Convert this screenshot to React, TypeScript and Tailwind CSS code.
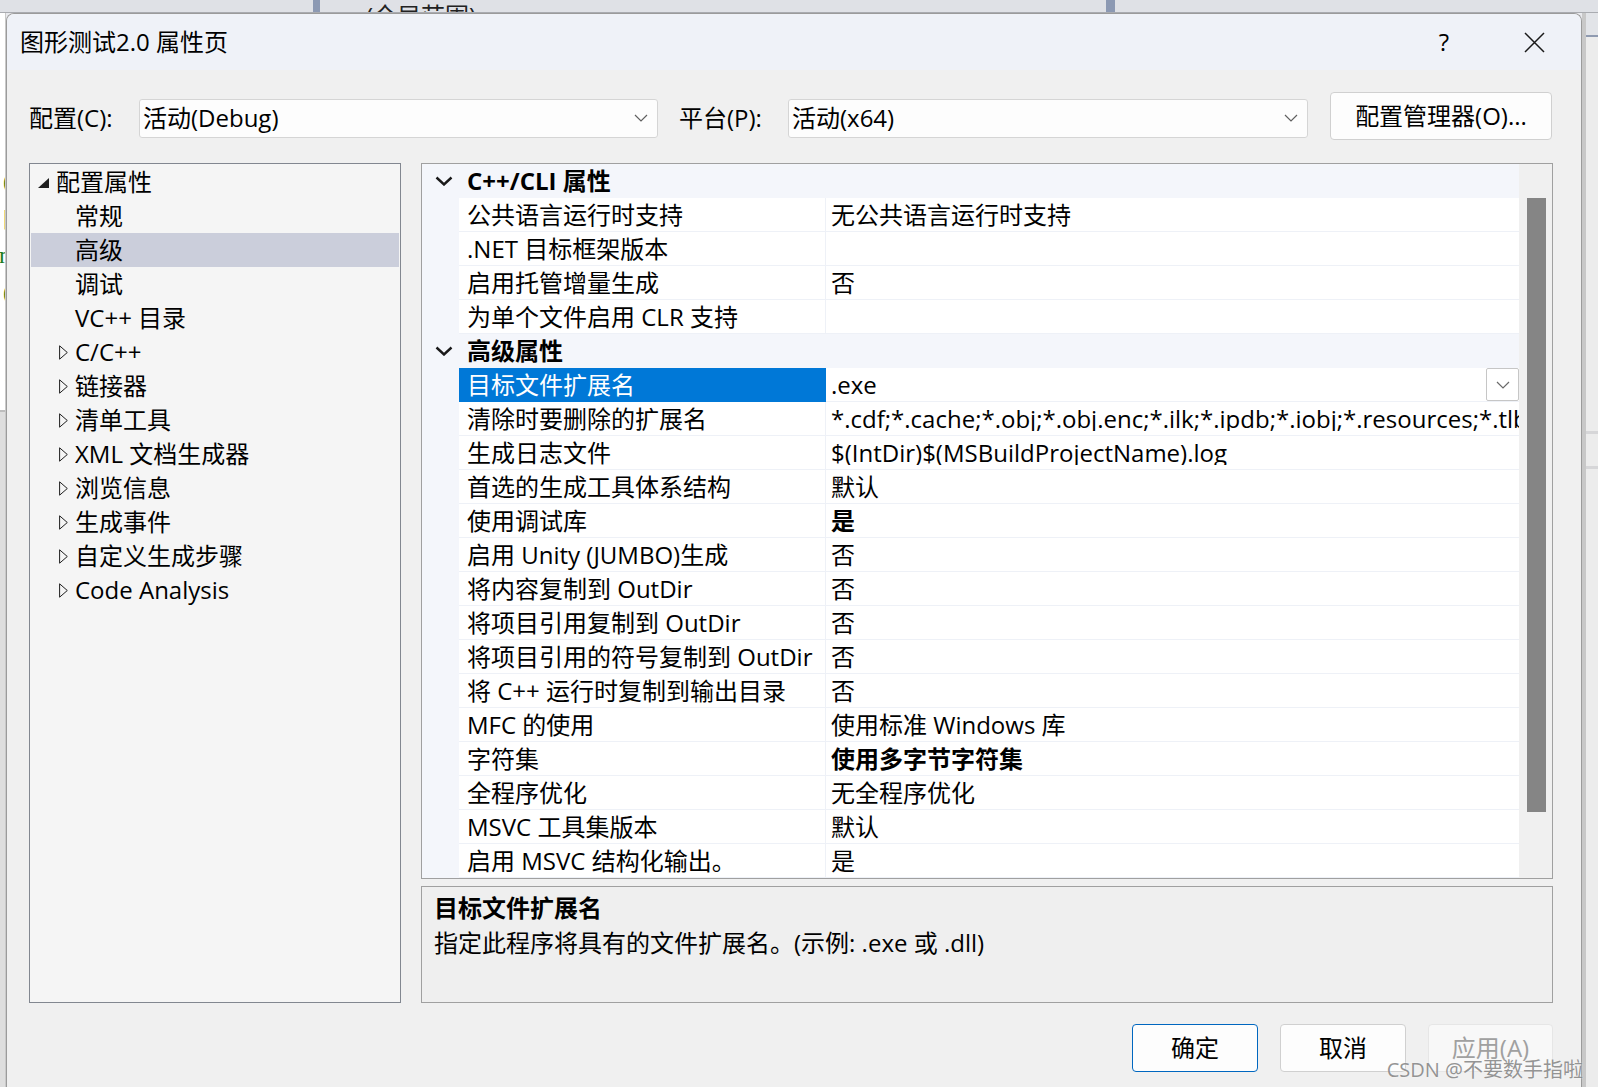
import React from 'react';

const FONT = "font-['Open_Sans','Noto_Sans_CJK_SC',sans-serif]";

type TreeItem = { label: string; level: 0 | 1; exp?: 'open' | 'closed'; sel?: boolean };

const treeItems: TreeItem[] = [
  { label: '配置属性', level: 0, exp: 'open' },
  { label: '常规', level: 1 },
  { label: '高级', level: 1, sel: true },
  { label: '调试', level: 1 },
  { label: 'VC++ 目录', level: 1 },
  { label: 'C/C++', level: 1, exp: 'closed' },
  { label: '链接器', level: 1, exp: 'closed' },
  { label: '清单工具', level: 1, exp: 'closed' },
  { label: 'XML 文档生成器', level: 1, exp: 'closed' },
  { label: '浏览信息', level: 1, exp: 'closed' },
  { label: '生成事件', level: 1, exp: 'closed' },
  { label: '自定义生成步骤', level: 1, exp: 'closed' },
  { label: 'Code Analysis', level: 1, exp: 'closed' },
];

type GridRow =
  | { cat: string }
  | { name: string; value: string; bold?: boolean; sel?: boolean };

const gridRows: GridRow[] = [
  { cat: 'C++/CLI 属性' },
  { name: '公共语言运行时支持', value: '无公共语言运行时支持' },
  { name: '.NET 目标框架版本', value: '' },
  { name: '启用托管增量生成', value: '否' },
  { name: '为单个文件启用 CLR 支持', value: '' },
  { cat: '高级属性' },
  { name: '目标文件扩展名', value: '.exe', sel: true },
  {
    name: '清除时要删除的扩展名',
    value:
      '*.cdf;*.cache;*.obj;*.obj.enc;*.ilk;*.ipdb;*.iobj;*.resources;*.tlb;*.tli;*.tlh;*.tmp;*.rsp;*.pgc;*.pgd;*.meta;*.tlog;*.manifest;*.res;*.pch;*.exp',
  },
  { name: '生成日志文件', value: '$(IntDir)$(MSBuildProjectName).log' },
  { name: '首选的生成工具体系结构', value: '默认' },
  { name: '使用调试库', value: '是', bold: true },
  { name: '启用 Unity (JUMBO)生成', value: '否' },
  { name: '将内容复制到 OutDir', value: '否' },
  { name: '将项目引用复制到 OutDir', value: '否' },
  { name: '将项目引用的符号复制到 OutDir', value: '否' },
  { name: '将 C++ 运行时复制到输出目录', value: '否' },
  { name: 'MFC 的使用', value: '使用标准 Windows 库' },
  { name: '字符集', value: '使用多字节字符集', bold: true },
  { name: '全程序优化', value: '无全程序优化' },
  { name: 'MSVC 工具集版本', value: '默认' },
  { name: '启用 MSVC 结构化输出。', value: '是' },
];

function ComboChevron() {
  return (
    <svg width="14" height="8" viewBox="0 0 14 8">
      <path d="M1 1l6 6 6-6" fill="none" stroke="#606060" strokeWidth="1.2" />
    </svg>
  );
}

function Combo({ text, width }: { text: string; width: string }) {
  return (
    <div
      className={`${width} h-[39px] mt-[4px] shrink-0 flex items-center justify-between bg-[#fdfdfd] border border-[#d5d5d5] rounded-[3px] pl-[3px] pr-[9px]`}
    >
      <span className="text-[24px] leading-none">{text}</span>
      <ComboChevron />
    </div>
  );
}

function TreeRow({ item }: { item: TreeItem }) {
  const pad = item.level === 0 ? 'pl-[7px]' : item.exp ? 'pl-[28px]' : 'pl-[44px]';
  return (
    <div
      className={`h-[34px] mx-[1px] flex items-center gap-[7px] ${pad} ${item.sel ? 'bg-[#cbcedb]' : ''}`}
    >
      {item.exp === 'open' && (
        <svg width="11" height="10" viewBox="0 0 11 10" className="mt-[1px]">
          <path d="M11 0V10H0Z" fill="#1e1e1e" />
        </svg>
      )}
      {item.exp === 'closed' && (
        <svg width="9" height="15" viewBox="0 0 9 15">
          <path d="M0.6 0.8L8.3 7.5L0.6 14.2Z" fill="none" stroke="#1e1e1e" strokeWidth="1" />
        </svg>
      )}
      <span className="text-[24px] leading-none whitespace-nowrap">{item.label}</span>
    </div>
  );
}

function GridLine({ row }: { row: GridRow }) {
  if ('cat' in row) {
    return (
      <div className="h-[34px] shrink-0 flex items-center bg-[#f4f6fb]">
        <div className="w-[37px] flex justify-center pl-[6px]">
          <svg width="18" height="10" viewBox="0 0 18 10">
            <path d="M1.5 1.5L9 8.5L16.5 1.5" fill="none" stroke="#1a1a1a" strokeWidth="2.4" />
          </svg>
        </div>
        <span className="pl-[8px] text-[24px] leading-none font-bold whitespace-nowrap">{row.cat}</span>
      </div>
    );
  }
  return (
    <div className="h-[34px] shrink-0 flex">
      <div className="w-[37px] shrink-0 bg-[#f4f6fb]" />
      <div
        className={`w-[367px] shrink-0 flex items-center pl-[8px] border-b border-r ${
          row.sel ? 'bg-[#0078d7] text-white border-[#0078d7]' : 'bg-white border-[#eef1f7]'
        }`}
      >
        <span className="text-[24px] leading-none whitespace-nowrap">{row.name}</span>
      </div>
      <div className="flex-1 min-w-0 flex items-center bg-white border-b border-[#eef1f7] pl-[5px] overflow-hidden">
        <span
          className={`flex-1 min-w-0 text-[24px] leading-none whitespace-nowrap overflow-hidden ${row.bold ? 'font-bold' : ''}`}
        >
          {row.value}
        </span>
        {row.sel && (
          <div className="w-[33px] h-[33px] shrink-0 flex items-center justify-center border border-[#c6c6c6] rounded-[2px] bg-white">
            <svg width="14" height="8" viewBox="0 0 14 8">
              <path d="M1 1l6 6 6-6" fill="none" stroke="#6a6a6a" strokeWidth="1.2" />
            </svg>
          </div>
        )}
      </div>
    </div>
  );
}

export default function App() {
  return (
    <div className={`relative w-[1598px] h-[1087px] overflow-hidden bg-[#e9eaee] text-black ${FONT}`}>
      {/* Desktop behind the dialog */}
      <div className="h-[13px] flex bg-[#dfe1e6] border-b border-[#a9abb0] overflow-hidden">
        <div className="w-[313px] shrink-0" />
        <div className="w-[7px] shrink-0 bg-[#8c99b3]" />
        <div className="w-[46px] shrink-0" />
        <span className="mt-[4px] text-[24px] leading-none whitespace-nowrap text-[#222]">(全局范围)</span>
        <div className="flex-1" />
        <div className="w-[9px] shrink-0 bg-[#8c99b3]" />
        <div className="w-[483px] shrink-0" />
      </div>

      <div className="flex h-[1074px]">
        {/* left editor sliver */}
        <div className="w-[6px] shrink-0 flex flex-col bg-white overflow-hidden border-r border-[#c9c9c9]">
          <div className="h-[150px] shrink-0" />
          <div className="flex flex-col items-end text-[#1c7c1c] text-[24px] leading-[37px] font-['Liberation_Serif',serif] -mr-[6px]">
            <span>(</span>
            <span>[</span>
            <span>n</span>
            <span>(</span>
            <span className="mt-[40px]">;</span>
          </div>
          <div className="mt-[22px] h-[2px] bg-[#bdbdbd]" />
          <div className="flex-1 bg-[#dedede]" />
        </div>

        {/* Dialog */}
        <div className="w-[1576px] shrink-0 flex flex-col bg-[#f0f0f0] border-t border-l border-r border-[#9b9b9b] rounded-t-[8px] overflow-hidden">
          {/* Title bar */}
          <div className="h-[56px] shrink-0 flex items-center bg-[#eff2f8] pl-[13px] pr-[24px]">
            <span className="text-[24px] leading-none whitespace-nowrap">图形测试2.0 属性页</span>
            <div className="flex-1" />
            <span className="w-[46px] text-center text-[24px] leading-none">?</span>
            <div className="w-[44px]" />
            <div className="w-[46px] flex justify-center">
              <svg width="21" height="21" viewBox="0 0 21 21">
                <path d="M1 1L20 20M20 1L1 20" stroke="#1a1a1a" strokeWidth="1.5" />
              </svg>
            </div>
          </div>

          {/* Body */}
          <div className="flex-1 min-w-0 flex flex-col pl-[22px] pr-[28px]">
            {/* Config row */}
            <div className="mt-[22px] h-[48px] flex items-center">
              <span className="w-[110px] mt-[4px] shrink-0 text-[24px] leading-none whitespace-nowrap">配置(C):</span>
              <Combo text="活动(Debug)" width="w-[519px]" />
              <span className="ml-[21px] mt-[4px] w-[109px] shrink-0 text-[24px] leading-none whitespace-nowrap">
                平台(P):
              </span>
              <Combo text="活动(x64)" width="w-[520px]" />
              <button className="ml-[22px] w-[222px] h-[48px] shrink-0 bg-[#fdfdfd] border border-[#d0d0d0] rounded-[4px] text-[24px] leading-none">
                配置管理器(O)...
              </button>
            </div>

            {/* Main panels */}
            <div className="mt-[23px] flex gap-[20px]">
              <div className="w-[372px] h-[840px] shrink-0 bg-[#f5f5f5] border border-[#828790] pt-[1px]">
                {treeItems.map((item) => (
                  <TreeRow key={item.label} item={item} />
                ))}
              </div>

              <div className="flex-1 min-w-0 flex flex-col gap-[7px]">
                <div className="h-[716px] flex border border-[#a0a0a0] bg-[#f4f6fb] overflow-hidden">
                  <div className="flex-1 min-w-0 flex flex-col">
                    {gridRows.map((row, i) => (
                      <GridLine key={i} row={row} />
                    ))}
                  </div>
                  <div className="w-[33px] shrink-0 bg-[#f0f0f0] pl-[8px] pt-[34px]">
                    <div className="w-[19px] h-[614px] bg-[#858585]" />
                  </div>
                </div>

                <div className="h-[117px] bg-[#efefef] border border-[#a0a0a0] pl-[12px] pt-[3px]">
                  <div className="h-[35px] flex items-center text-[24px] leading-none font-bold">目标文件扩展名</div>
                  <div className="h-[35px] flex items-center text-[24px] leading-none whitespace-nowrap">
                    指定此程序将具有的文件扩展名。(示例: .exe 或 .dll)
                  </div>
                </div>
              </div>
            </div>

            {/* Buttons */}
            <div className="mt-[21px] flex justify-end gap-[22px]">
              <button className="w-[126px] h-[48px] bg-[#fdfdfd] border border-[#0067c0] rounded-[4px] text-[24px] leading-none">
                确定
              </button>
              <button className="w-[126px] h-[48px] bg-[#fdfdfd] border border-[#d0d0d0] rounded-[4px] text-[24px] leading-none">
                取消
              </button>
              <button className="w-[125px] h-[48px] bg-[#f8f8f8] border border-[#e6e6e6] rounded-[4px] text-[24px] leading-none text-[#a0a0a0]">
                应用(A)
              </button>
            </div>
          </div>
        </div>

        {/* right side of desktop */}
        <div className="w-[16px] shrink-0 flex flex-col bg-[#ececec] border-l-[4px] border-[#c8c8c8]">
          <div className="h-[24px] bg-[#e2e4e8] border-b-2 border-[#8f9ab0]" />
          <div className="h-[394px]" />
          <div className="h-[3px] bg-[#d6d6d8]" />
          <div className="h-[32px]" />
          <div className="h-[3px] bg-[#d6d6d8]" />
          <div className="flex-1" />
        </div>
      </div>

      {/* watermark */}
      <span className="absolute right-[15px] bottom-[7px] text-[20px] leading-none whitespace-nowrap text-[#8a8a8a] opacity-90 [text-shadow:0_0_2px_#ffffff]">
        CSDN @不要数手指啦
      </span>
    </div>
  );
}
